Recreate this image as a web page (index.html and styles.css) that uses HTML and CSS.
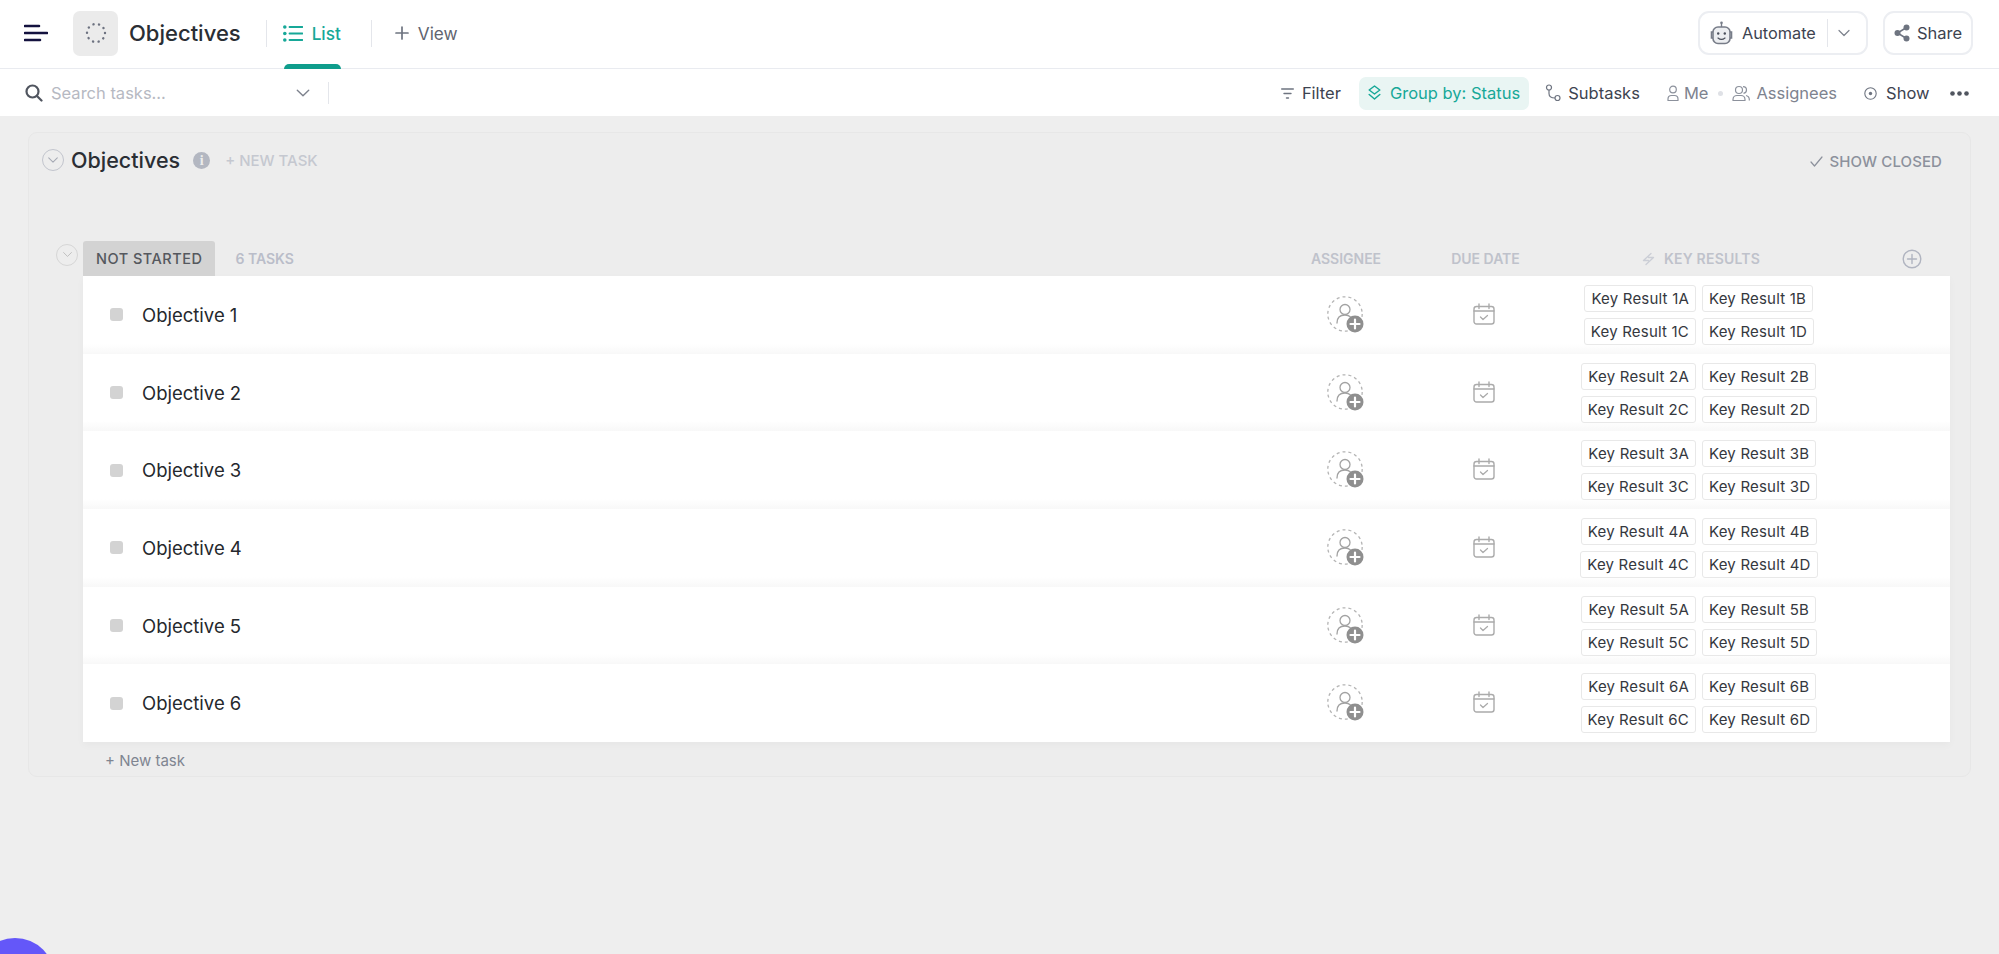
FILE: index.html
```html
<!DOCTYPE html>
<html lang="en">
<head>
    <meta charset="UTF-8">
    <title>Objectives - List</title>
    <link rel="stylesheet" href="styles.css">
</head>
<body>
    <svg class="sprite" width="0" height="0">
        <symbol id="chev" viewBox="0 0 14 14"><path d="M2 4.500l5 5 5-5" fill="none" stroke="currentColor" stroke-width="1.200" stroke-linecap="round" stroke-linejoin="round"/></symbol>
        <symbol id="person-add" viewBox="0 0 38 38">
            <circle cx="18" cy="18" r="17.200" fill="none" stroke="#b4b4b4" stroke-width="1.300" stroke-dasharray="3 3"/>
            <circle cx="18" cy="13.500" r="5" fill="none" stroke="#a2a2a2" stroke-width="1.300"/>
            <path d="M10 27c0-5 3-8 8-8 2.500 0 4 .6 5.500 2" fill="none" stroke="#a2a2a2" stroke-width="1.300" stroke-linecap="round"/>
            <circle cx="28" cy="28" r="8.500" fill="#8f8f8f"/>
            <path d="M28 23.500v9M23.500 28h9" stroke="#fff" stroke-width="2.200" stroke-linecap="round"/>
        </symbol>
        <symbol id="calendar" viewBox="0 0 22 22">
            <rect x="1" y="3.500" width="20" height="17.500" rx="2.500" fill="none" stroke="#ababab" stroke-width="1.400"/>
            <path d="M1 8h20M6 1v4.500M16 1v4.500" fill="none" stroke="#ababab" stroke-width="1.400" stroke-linecap="round"/>
            <path d="M7.500 14l2.500 2.500 4.500-4" fill="none" stroke="#ababab" stroke-width="1.300" stroke-linecap="round" stroke-linejoin="round"/>
        </symbol>
    </svg>

    <!-- Top bar -->
    <header class="topbar">
        <svg class="menu-icon" width="24" height="18" viewBox="0 0 24 18"><path d="M1 2h14M1 9h22M1 16h15" stroke="#14123f" stroke-width="2.600" stroke-linecap="round"/></svg>
        <div class="space-icon">
            <svg width="22" height="22" viewBox="0 0 22 22"><circle cx="11" cy="11" r="9" fill="none" stroke="#6d7280" stroke-width="2.400" stroke-dasharray="0.100 5.550" stroke-linecap="round"/></svg>
        </div>
        <h1 class="page-title">Objectives</h1>
        <span class="bar-sep"></span>
        <a class="tab tab-active">
            <svg width="20" height="17" viewBox="0 0 20 17"><path d="M6.500 2h13M6.500 8.500h13M6.500 15h13" stroke="#17a898" stroke-width="1.800" stroke-linecap="round"/><circle cx="1.800" cy="2" r="1.800" fill="#17a898"/><circle cx="1.800" cy="8.500" r="1.800" fill="#17a898"/><circle cx="1.800" cy="15" r="1.800" fill="#17a898"/></svg>
            List
        </a>
        <span class="bar-sep"></span>
        <a class="tab tab-view">
            <svg width="14" height="14" viewBox="0 0 14 14"><path d="M7 1v12M1 7h12" stroke="#6e7480" stroke-width="1.700" stroke-linecap="round"/></svg>
            View
        </a>
        <div class="topbar-right">
            <div class="top-btn automate-btn">
                <svg width="23" height="24" viewBox="0 0 23 24"><path d="M11.500 2v4" stroke="#777c88" stroke-width="1.400"/><circle cx="11.500" cy="1.800" r="1.300" fill="#777c88"/><path d="M3 11H1.500v6H3M20 11h1.500v6H20" fill="none" stroke="#777c88" stroke-width="1.600"/><rect x="3" y="6" width="17" height="16.500" rx="5" fill="#eceef1" stroke="#777c88" stroke-width="1.600"/><circle cx="8.200" cy="12.500" r="1.200" fill="#4a4f5b"/><circle cx="14.800" cy="12.500" r="1.200" fill="#4a4f5b"/><path d="M8 17c2 1.600 5 1.600 7 0" fill="none" stroke="#4a4f5b" stroke-width="1.200" stroke-linecap="round"/></svg>
                <span class="automate-label">Automate</span>
                <span class="btn-sep"></span>
                <svg class="btn-chev" width="14" height="14"><use href="#chev"/></svg>
            </div>
            <div class="top-btn share-btn">
                <svg width="16" height="18" viewBox="0 0 16 18"><path d="M12.500 3.500L3.500 9l9 5.500" fill="none" stroke="#6e7480" stroke-width="1.500"/><circle cx="12.500" cy="3.500" r="3" fill="#6e7480"/><circle cx="3.500" cy="9" r="3" fill="#6e7480"/><circle cx="12.500" cy="14.500" r="3" fill="#6e7480"/></svg>
                Share
            </div>
        </div>
    </header>

    <!-- Toolbar -->
    <div class="toolbar">
        <div class="search">
            <svg width="18" height="18" viewBox="0 0 18 18"><circle cx="7.500" cy="7.500" r="6" fill="none" stroke="#50555f" stroke-width="2.200"/><path d="M12 12l4.500 4.500" stroke="#50555f" stroke-width="2.200" stroke-linecap="round"/></svg>
            <span class="search-text">Search tasks...</span>
            <svg class="search-chev" width="16" height="16"><use href="#chev"/></svg>
        </div>
        <span class="search-sep"></span>
        <div class="tools">
            <span class="tool tool-filter">
                <svg width="13" height="11" viewBox="0 0 13 11"><path d="M.7 1h11.600M3 5.500h7M5.500 10h2" stroke="#6e7480" stroke-width="1.400" stroke-linecap="round"/></svg>
                Filter
            </span>
            <span class="tool tool-group">
                <svg width="13" height="16" viewBox="0 0 13 16"><path d="M6.500 1l5.300 4-5.300 4-5.300-4zM1.200 9.500l5.300 4.500 5.300-4.500" fill="none" stroke="#17a898" stroke-width="1.500" stroke-linejoin="round" stroke-linecap="round"/></svg>
                Group by: Status
            </span>
            <span class="tool tool-subtasks">
                <svg width="16" height="18" viewBox="0 0 16 18"><circle cx="4" cy="3.500" r="2.500" fill="none" stroke="#6e7480" stroke-width="1.200"/><circle cx="12.500" cy="14" r="2.500" fill="none" stroke="#6e7480" stroke-width="1.200"/><path d="M4 6v3.500c0 3 2 4.500 6 4.500" fill="none" stroke="#6e7480" stroke-width="1.200"/></svg>
                Subtasks
            </span>
            <span class="tool tool-me">
                <svg width="12" height="17" viewBox="0 0 12 17"><circle cx="6" cy="4.500" r="3.300" fill="none" stroke="#8c919c" stroke-width="1.200"/><path d="M1 15.500v-1.500c0-2.200 1.500-3.500 3.500-3.500h3c2 0 3.500 1.300 3.500 3.500v1.500z" fill="none" stroke="#8c919c" stroke-width="1.200" stroke-linejoin="round"/></svg>
                Me
            </span>
            <span class="tool-dot"></span>
            <span class="tool tool-assignees">
                <svg width="18" height="17" viewBox="0 0 18 17"><circle cx="7" cy="5" r="3.500" fill="none" stroke="#8c919c" stroke-width="1.200"/><path d="M1 15.500v-1c0-2.500 2-4 4-4h4c2 0 4 1.500 4 4v1zM11 1.700c2.500 0 3.500 1.500 3.500 3.300s-1 3-3 3.300M14 10.500c2 .5 3.300 1.800 3.300 4v1" fill="none" stroke="#8c919c" stroke-width="1.200" stroke-linejoin="round"/></svg>
                Assignees
            </span>
            <span class="tool tool-show">
                <svg width="13" height="13" viewBox="0 0 13 13"><circle cx="6.500" cy="6.500" r="5.700" fill="none" stroke="#6e7480" stroke-width="1.100"/><circle cx="6.500" cy="6.500" r="1.700" fill="#6e7480"/></svg>
                Show
            </span>
            <svg class="more" width="19" height="5" viewBox="0 0 19 5"><circle cx="2.500" cy="2.500" r="2.300" fill="#50555f"/><circle cx="9.500" cy="2.500" r="2.300" fill="#50555f"/><circle cx="16.500" cy="2.500" r="2.300" fill="#50555f"/></svg>
        </div>
    </div>

    <!-- List -->
    <main class="content">
        <section class="panel">
            <div class="panel-head">
                <span class="round-toggle panel-toggle"><svg width="12" height="12"><use href="#chev"/></svg></span>
                <h2 class="panel-title">Objectives</h2>
                <span class="info-icon">i</span>
                <span class="new-task-top">+ NEW TASK</span>
                <span class="show-closed">
                    <svg width="13" height="11" viewBox="0 0 13 11"><path d="M1 6l3.500 4L12 1" fill="none" stroke="#8c919c" stroke-width="1.200" stroke-linecap="round" stroke-linejoin="round"/></svg>
                    SHOW CLOSED
                </span>
            </div>

            <div class="group">
                <div class="grid-row group-head">
                    <div class="status-cell">
                        <span class="round-toggle group-toggle"><svg width="11" height="11"><use href="#chev"/></svg></span>
                        <span class="status-label">NOT STARTED</span>
                        <span class="task-count">6 TASKS</span>
                    </div>
                    <div class="col-title">ASSIGNEE</div>
                    <div class="col-title">DUE DATE</div>
                    <div class="col-title col-key">
                        <svg width="15" height="14" viewBox="0 0 15 14"><path d="M10 1.500L2.500 8.500h5M5 12.500l7.500-7h-5" fill="none" stroke="#cbced6" stroke-width="1.300" stroke-linecap="round" stroke-linejoin="round"/></svg>
                        KEY RESULTS
                    </div>
                    <div class="col-add">
                        <svg width="20" height="20" viewBox="0 0 20 20"><circle cx="10" cy="10" r="8.800" fill="none" stroke="#b0b4c0" stroke-width="1.400"/><path d="M10 5.500v9M5.500 10h9" stroke="#b0b4c0" stroke-width="1.400" stroke-linecap="round"/></svg>
                    </div>
                </div>

                <div class="rows">
                    <div class="grid-row task">
                        <div class="task-name"><span class="status-dot"></span>Objective 1</div>
                        <div class="cell"><svg class="icon-assignee"><use href="#person-add"/></svg></div>
                        <div class="cell"><svg class="icon-cal"><use href="#calendar"/></svg></div>
                        <div class="tags">
                            <span class="tag">Key Result 1A</span><span class="tag">Key Result 1B</span>
                            <span class="tag">Key Result 1C</span><span class="tag">Key Result 1D</span>
                        </div>
                    </div>
                    <div class="grid-row task">
                        <div class="task-name"><span class="status-dot"></span>Objective 2</div>
                        <div class="cell"><svg class="icon-assignee"><use href="#person-add"/></svg></div>
                        <div class="cell"><svg class="icon-cal"><use href="#calendar"/></svg></div>
                        <div class="tags">
                            <span class="tag">Key Result 2A</span><span class="tag">Key Result 2B</span>
                            <span class="tag">Key Result 2C</span><span class="tag">Key Result 2D</span>
                        </div>
                    </div>
                    <div class="grid-row task">
                        <div class="task-name"><span class="status-dot"></span>Objective 3</div>
                        <div class="cell"><svg class="icon-assignee"><use href="#person-add"/></svg></div>
                        <div class="cell"><svg class="icon-cal"><use href="#calendar"/></svg></div>
                        <div class="tags">
                            <span class="tag">Key Result 3A</span><span class="tag">Key Result 3B</span>
                            <span class="tag">Key Result 3C</span><span class="tag">Key Result 3D</span>
                        </div>
                    </div>
                    <div class="grid-row task">
                        <div class="task-name"><span class="status-dot"></span>Objective 4</div>
                        <div class="cell"><svg class="icon-assignee"><use href="#person-add"/></svg></div>
                        <div class="cell"><svg class="icon-cal"><use href="#calendar"/></svg></div>
                        <div class="tags">
                            <span class="tag">Key Result 4A</span><span class="tag">Key Result 4B</span>
                            <span class="tag">Key Result 4C</span><span class="tag">Key Result 4D</span>
                        </div>
                    </div>
                    <div class="grid-row task">
                        <div class="task-name"><span class="status-dot"></span>Objective 5</div>
                        <div class="cell"><svg class="icon-assignee"><use href="#person-add"/></svg></div>
                        <div class="cell"><svg class="icon-cal"><use href="#calendar"/></svg></div>
                        <div class="tags">
                            <span class="tag">Key Result 5A</span><span class="tag">Key Result 5B</span>
                            <span class="tag">Key Result 5C</span><span class="tag">Key Result 5D</span>
                        </div>
                    </div>
                    <div class="grid-row task">
                        <div class="task-name"><span class="status-dot"></span>Objective 6</div>
                        <div class="cell"><svg class="icon-assignee"><use href="#person-add"/></svg></div>
                        <div class="cell"><svg class="icon-cal"><use href="#calendar"/></svg></div>
                        <div class="tags">
                            <span class="tag">Key Result 6A</span><span class="tag">Key Result 6B</span>
                            <span class="tag">Key Result 6C</span><span class="tag">Key Result 6D</span>
                        </div>
                    </div>
                </div>
                <div class="new-task">+ New task</div>
            </div>
        </section>
    </main>

    <div class="fab"></div>
</body>
</html>
```

FILE: styles.css
```css
* {
    margin: 0;
    padding: 0;
    box-sizing: border-box;
}

html, body {
    height: 100%;
    overflow: hidden;
}

body {
    background: #eeeeee;
    color: #2a2e34;
    font-family: 'Inter', sans-serif;
}

.sprite {
    position: absolute;
}

/* Top bar */
.topbar {
    height: 69px;
    background: #fff;
    border-bottom: 1px solid #e9ebf0;
    display: flex;
    align-items: center;
    padding: 0 26px 2px 24px;
}

.menu-icon {
    flex: none;
}

.space-icon {
    width: 45px;
    height: 45px;
    margin-left: 25px;
    background: #ebebeb;
    border-radius: 7px;
    display: flex;
    align-items: center;
    justify-content: center;
}

.page-title {
    font-size: 22px;
    font-weight: 500;
    margin-left: 11px;
}

.bar-sep {
    width: 1px;
    height: 27px;
    background: #e4e6eb;
}

.page-title + .bar-sep {
    margin-left: 25px;
}

.tab {
    display: flex;
    align-items: center;
    font-size: 17.200px;
}

.tab-active {
    position: relative;
    color: #17a898;
    gap: 9px;
    font-weight: 500;
    margin: 0 30px 0 16px;
}

.tab-active::after {
    content: "";
    position: absolute;
    left: 1px;
    right: 0;
    bottom: -25px;
    height: 5px;
    background: #0f9d8c;
    border-radius: 5px 5px 0 0;
}

.tab-view {
    color: #5f6470;
    gap: 9px;
    margin-left: 23px;
}

.topbar-right {
    margin-left: auto;
    display: flex;
    gap: 15px;
}

.top-btn {
    height: 44px;
    background: #fff;
    border: 2px solid #eceef2;
    border-radius: 11px;
    display: flex;
    align-items: center;
    font-size: 16.300px;
    color: #3d4350;
}

.automate-btn {
    width: 170px;
    padding-left: 10px;
}

.automate-label {
    margin-left: 9px;
}

.btn-sep {
    width: 1px;
    height: 28px;
    background: #e4e6eb;
    margin-left: 11px;
}

.btn-chev {
    margin-left: 9px;
    color: #7d828d;
}

.share-btn {
    width: 90px;
    padding-left: 9px;
    gap: 7px;
    font-size: 16.500px;
}

/* Toolbar */
.toolbar {
    height: 47px;
    background: #fff;
    display: flex;
    align-items: center;
    padding: 1px 30px 0 25px;
}

.search {
    width: 286px;
    display: flex;
    align-items: center;
}

.search-text {
    margin-left: 8px;
    font-size: 16.500px;
    color: #b6b9c2;
}

.search-chev {
    margin-left: auto;
    color: #7d828d;
}

.search-sep {
    width: 1px;
    height: 22px;
    background: #e4e6eb;
    margin-left: 17px;
}

.tools {
    margin-left: auto;
    display: flex;
    align-items: center;
    font-size: 16.500px;
    color: #3d4350;
}

.tool {
    display: flex;
    align-items: center;
    gap: 7px;
}

.tool-filter {
    gap: 8px;
}

.tool-group {
    height: 33px;
    padding: 0 9px;
    margin-left: 18px;
    background: #e9f5f3;
    border-radius: 7px;
    color: #17a898;
    gap: 9px;
}

.tool-subtasks {
    margin-left: 16px;
}

.tool-me {
    margin-left: 27px;
    color: #7e838f;
    gap: 5px;
}

.tool-dot {
    width: 5px;
    height: 5px;
    border-radius: 50%;
    background: #dfe1e6;
    margin: 0 9.500px;
}

.tool-assignees {
    color: #7e838f;
    gap: 6px;
}

.tool-show {
    margin-left: 27px;
    gap: 9px;
}

.more {
    margin-left: 20.500px;
}

/* List panel */
.content {
    padding: 16px 28px 0;
}

.panel {
    height: 645px;
    background: #ededed;
    border: 1px solid #e7e7e7;
    border-radius: 9px;
    padding: 0 20px 0 54px;
}

.panel-head {
    height: 44px;
    margin-top: 5px;
    display: flex;
    align-items: center;
    margin-left: -41px;
}

.round-toggle {
    flex: none;
    border-radius: 50%;
    display: flex;
    align-items: center;
    justify-content: center;
}

.panel-toggle {
    width: 22px;
    height: 22px;
    border: 1.500px solid #c2c5cd;
    color: #a5a9b4;
}

.panel-title {
    font-size: 21.500px;
    font-weight: 500;
    margin-left: 7px;
}

.info-icon {
    width: 17px;
    height: 17px;
    margin-left: 13px;
    border-radius: 50%;
    background: #b3b7c1;
    color: #ececec;
    font-family: 'Liberation Serif', serif;
    font-size: 14px;
    font-weight: 700;
    text-align: center;
    line-height: 17px;
}

.new-task-top {
    margin-left: 15px;
    font-size: 15px;
    font-weight: 500;
    color: #c5c8d0;
}

.show-closed {
    margin: 2px 8px 0 auto;
    display: flex;
    align-items: center;
    gap: 7px;
    font-size: 15px;
    font-weight: 500;
    letter-spacing: .1px;
    color: #8c919c;
}

.group {
    margin-top: 59px;
}

.grid-row {
    display: grid;
    grid-template-columns: 1fr 140px 139px 288px 107px;
}

.group-head {
    height: 35px;
    align-items: center;
}

.status-cell {
    display: flex;
    align-items: center;
    height: 100%;
}

.group-toggle {
    width: 22px;
    height: 22px;
    margin-left: -27px;
    margin-right: 5px;
    border: 1.500px solid #d6d6d6;
    color: #bdbdbd;
    margin-top: -8px;
}

.status-label {
    height: 100%;
    padding: 0 13px;
    background: #d3d3d3;
    border-radius: 3px 3px 0 0;
    display: flex;
    align-items: center;
    font-size: 14.500px;
    font-weight: 500;
    letter-spacing: .5px;
    color: #55585e;
}

.task-count {
    margin-left: 20px;
    font-size: 14px;
    font-weight: 600;
    color: #babdc9;
}

.col-title {
    text-align: center;
    font-size: 14px;
    font-weight: 600;
    color: #bfc2cb;
}

.col-key {
    display: flex;
    align-items: center;
    justify-content: center;
    gap: 8px;
    letter-spacing: .2px;
    padding-left: 3px;
}

.col-add {
    padding-left: 59px;
    height: 20px;
}

/* Rows */
.rows {
    background: #fff;
    box-shadow: 0 3px 8px rgba(0, 0, 0, .03);
}

.task {
    height: 77.700px;
    align-items: center;
    background: linear-gradient(#fff calc(100% - 10px), #f8f8f8);
}

.task:last-child {
    background: #fff;
}

.task-name {
    display: flex;
    align-items: center;
    font-size: 18.500px;
    color: #25282d;
    padding-left: 27px;
}

.status-dot {
    width: 13px;
    height: 13px;
    margin-right: 19px;
    background: #d3d3d3;
    border-radius: 3px;
}

.cell {
    display: flex;
    justify-content: center;
}

.icon-assignee {
    width: 38px;
    height: 38px;
    margin-left: -1px;
}

.icon-cal {
    width: 22px;
    height: 22px;
    margin: -2px 0 0 -3px;
}

.tags {
    display: grid;
    grid-template-columns: 1fr 1fr;
    gap: 6px;
}

.tag {
    height: 27px;
    padding: 0 6px;
    background: #fff;
    border: 1px solid #e8e8e8;
    border-radius: 3px;
    font-size: 15px;
    letter-spacing: .2px;
    line-height: 25px;
    color: #35383e;
    white-space: nowrap;
}

.tag:nth-child(odd) {
    justify-self: end;
}

.tag:nth-child(even) {
    justify-self: start;
}

.new-task {
    margin: 9px 0 0 22px;
    font-size: 15px;
    color: #7f8591;
}

/* Corner button, half off the screen */
.fab {
    position: fixed;
    left: -25px;
    top: 938px;
    width: 80px;
    height: 80px;
    background: #6457f9;
    border-radius: 50%;
}
```
